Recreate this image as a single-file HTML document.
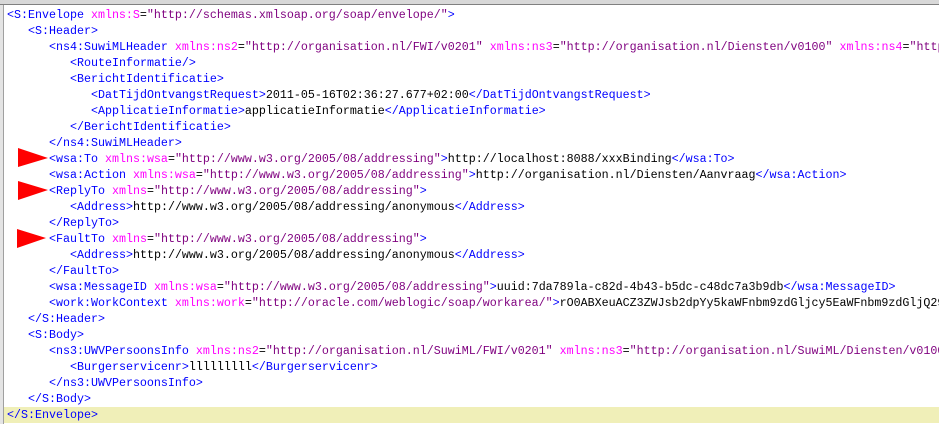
<!DOCTYPE html>
<html><head><meta charset="utf-8"><style>
html,body{margin:0;padding:0;}
body{width:939px;height:424px;background:#fff;position:relative;overflow:hidden;font-family:"Liberation Mono",monospace;font-size:11.67px;}
.top{position:absolute;left:0;top:0;width:939px;height:4px;background:#d8d8d8;border-bottom:1px solid #808080;}
.lb{position:absolute;left:0;top:5px;width:3px;height:419px;background:#e4e4e4;border-right:1px solid #a0a0a0;}
.l{position:absolute;left:0;height:16px;line-height:16px;white-space:pre;width:939px;box-sizing:border-box;overflow:hidden;}
.t{color:#0000ff}.a{color:#ff00ff}.v{color:#7f007f}.x{color:#000}
.hl{background:#f0efb8;left:4px;width:935px;}
svg{position:absolute;}
</style></head><body>
<div class="top"></div><div class="lb"></div>
<div class="l" style="top:7px;padding-left:7px"><span class="t">&lt;S:Envelope</span> <span class="a">xmlns:S</span>=<span class="v">"http://schemas.xmlsoap.org/soap/envelope/"</span><span class="t">&gt;</span></div>
<div class="l" style="top:23px;padding-left:28px"><span class="t">&lt;S:Header&gt;</span></div>
<div class="l" style="top:39px;padding-left:49px"><span class="t">&lt;ns4:SuwiMLHeader</span> <span class="a">xmlns:ns2</span>=<span class="v">"http://organisation.nl/FWI/v0201"</span> <span class="a">xmlns:ns3</span>=<span class="v">"http://organisation.nl/Diensten/v0100"</span> <span class="a">xmlns:ns4</span>=<span class="v">"http://organisation.nl/</span></div>
<div class="l" style="top:55px;padding-left:70px"><span class="t">&lt;RouteInformatie/&gt;</span></div>
<div class="l" style="top:71px;padding-left:70px"><span class="t">&lt;BerichtIdentificatie&gt;</span></div>
<div class="l" style="top:87px;padding-left:91px"><span class="t">&lt;DatTijdOntvangstRequest&gt;</span><span class="x">2011-05-16T02:36:27.677+02:00</span><span class="t">&lt;/DatTijdOntvangstRequest&gt;</span></div>
<div class="l" style="top:103px;padding-left:91px"><span class="t">&lt;ApplicatieInformatie&gt;</span><span class="x">applicatieInformatie</span><span class="t">&lt;/ApplicatieInformatie&gt;</span></div>
<div class="l" style="top:119px;padding-left:70px"><span class="t">&lt;/BerichtIdentificatie&gt;</span></div>
<div class="l" style="top:135px;padding-left:49px"><span class="t">&lt;/ns4:SuwiMLHeader&gt;</span></div>
<div class="l" style="top:151px;padding-left:49px"><span class="t">&lt;wsa:To</span> <span class="a">xmlns:wsa</span>=<span class="v">"http://www.w3.org/2005/08/addressing"</span><span class="t">&gt;</span><span class="x">http://localhost:8088/xxxBinding</span><span class="t">&lt;/wsa:To&gt;</span></div>
<div class="l" style="top:167px;padding-left:49px"><span class="t">&lt;wsa:Action</span> <span class="a">xmlns:wsa</span>=<span class="v">"http://www.w3.org/2005/08/addressing"</span><span class="t">&gt;</span><span class="x">http://organisation.nl/Diensten/Aanvraag</span><span class="t">&lt;/wsa:Action&gt;</span></div>
<div class="l" style="top:183px;padding-left:49px"><span class="t">&lt;ReplyTo</span> <span class="a">xmlns</span>=<span class="v">"http://www.w3.org/2005/08/addressing"</span><span class="t">&gt;</span></div>
<div class="l" style="top:199px;padding-left:70px"><span class="t">&lt;Address&gt;</span><span class="x">http://www.w3.org/2005/08/addressing/anonymous</span><span class="t">&lt;/Address&gt;</span></div>
<div class="l" style="top:215px;padding-left:49px"><span class="t">&lt;/ReplyTo&gt;</span></div>
<div class="l" style="top:231px;padding-left:49px"><span class="t">&lt;FaultTo</span> <span class="a">xmlns</span>=<span class="v">"http://www.w3.org/2005/08/addressing"</span><span class="t">&gt;</span></div>
<div class="l" style="top:247px;padding-left:70px"><span class="t">&lt;Address&gt;</span><span class="x">http://www.w3.org/2005/08/addressing/anonymous</span><span class="t">&lt;/Address&gt;</span></div>
<div class="l" style="top:263px;padding-left:49px"><span class="t">&lt;/FaultTo&gt;</span></div>
<div class="l" style="top:279px;padding-left:49px"><span class="t">&lt;wsa:MessageID</span> <span class="a">xmlns:wsa</span>=<span class="v">"http://www.w3.org/2005/08/addressing"</span><span class="t">&gt;</span><span class="x">uuid:7da789la-c82d-4b43-b5dc-c48dc7a3b9db</span><span class="t">&lt;/wsa:MessageID&gt;</span></div>
<div class="l" style="top:295px;padding-left:49px"><span class="t">&lt;work:WorkContext</span> <span class="a">xmlns:work</span>=<span class="v">"http://oracle.com/weblogic/soap/workarea/"</span><span class="t">&gt;</span><span class="x">rO0ABXeuACZ3ZWJsb2dpYy5kaWFnbm9zdGljcy5EaWFnbm9zdGljQ29udGV4</span></div>
<div class="l" style="top:311px;padding-left:28px"><span class="t">&lt;/S:Header&gt;</span></div>
<div class="l" style="top:327px;padding-left:28px"><span class="t">&lt;S:Body&gt;</span></div>
<div class="l" style="top:343px;padding-left:49px"><span class="t">&lt;ns3:UWVPersoonsInfo</span> <span class="a">xmlns:ns2</span>=<span class="v">"http://organisation.nl/SuwiML/FWI/v0201"</span> <span class="a">xmlns:ns3</span>=<span class="v">"http://organisation.nl/SuwiML/Diensten/v0100"</span></div>
<div class="l" style="top:359px;padding-left:70px"><span class="t">&lt;Burgerservicenr&gt;</span><span class="x">lllllllll</span><span class="t">&lt;/Burgerservicenr&gt;</span></div>
<div class="l" style="top:375px;padding-left:49px"><span class="t">&lt;/ns3:UWVPersoonsInfo&gt;</span></div>
<div class="l" style="top:391px;padding-left:28px"><span class="t">&lt;/S:Body&gt;</span></div>
<div class="l hl" style="top:407px;padding-left:3px"><span class="t">&lt;/S:Envelope&gt;</span></div>
<svg style="left:0;top:0" width="60" height="260"><polygon points="18,148 48,158 18,167" fill="#f00"/><polygon points="18,181 48,190 18,200" fill="#f00"/><polygon points="17,229 46,238 17,248" fill="#f00"/></svg>
</body></html>
